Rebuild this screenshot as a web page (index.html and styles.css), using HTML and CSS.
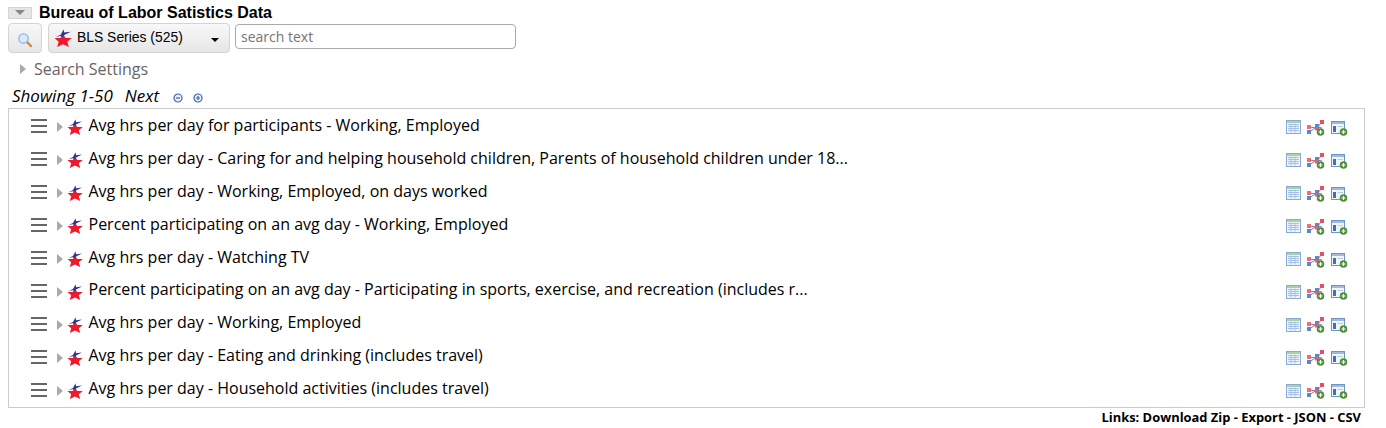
FILE: index.html
```html
<!DOCTYPE html>
<html lang="en">
<head>
<meta charset="UTF-8">
<title>Bureau of Labor Satistics Data</title>
<link rel="stylesheet" href="styles.css">
</head>
<body>
<svg class="defs" width="0" height="0">
    <defs>
        <symbol id="star" viewBox="0 0 16 16">
            <path d="M8 4.500 L10.200 8 L15.800 8 L11.800 11.300 L13.200 16 L8 13.500 L2.800 16 L4.200 11.300 L0.400 8 L5.800 8Z" fill="#f0182c"/>
            <path d="M1.500 7 L6 5 L8.500 0.300 L9 3.200 L15 2.400 L9.500 5.200 L7.500 7 L5.500 6.300Z" fill="#2f3590"/>
        </symbol>
        <symbol id="table" viewBox="0 0 15 15">
            <rect x="0.500" y="0.500" width="14" height="13" fill="#eef4fb" stroke="#8aaad6"/>
            <rect x="1" y="1" width="13" height="2" fill="#a9d39a"/>
            <path d="M2 4.500H13M2 6.500H13M2 8.500H13M2 10.500H13M5 3.500V12.500M9 3.500V12.500" stroke="#a5c0e4" fill="none"/>
        </symbol>
        <symbol id="chart" viewBox="0 0 18 16">
            <path d="M2 7 L10 8 L15 2" stroke="#e8505e" fill="none"/>
            <path d="M2 12 L10 7 L15 8" stroke="#5f86c8" fill="none"/>
            <rect x="0" y="5" width="4" height="4" fill="#e8707a"/>
            <rect x="13" y="0" width="4" height="4" fill="#e8505e"/>
            <rect x="8" y="6.500" width="4" height="4" fill="#e8606e"/>
            <rect x="0" y="10" width="4" height="4" fill="#5f86c8"/>
            <rect x="8" y="4" width="4" height="3.500" fill="#5f86c8"/>
            <circle cx="13.500" cy="12" r="3.800" fill="#4f8f3c"/>
            <path d="M11.500 12H15.500M13.500 10V14" stroke="#fff" stroke-width="1.200"/>
        </symbol>
        <symbol id="panel" viewBox="0 0 17 16">
            <rect x="0.500" y="1.500" width="13" height="12" fill="#f2f6fb" stroke="#6f94c6"/>
            <rect x="1" y="2" width="12" height="2" fill="#9dbce2"/>
            <rect x="2" y="6" width="3" height="6" fill="#3f70b4"/>
            <path d="M6.500 6.500H12" stroke="#b9cde6"/>
            <circle cx="12.500" cy="12" r="3.800" fill="#4f8f3c"/>
            <path d="M10.500 12H14.500M12.500 10V14" stroke="#fff" stroke-width="1.200"/>
        </symbol>
    </defs>
</svg>

<div class="title-bar">
    <button class="toggle"><span class="toggle-arrow"></span></button>
    <span class="title">Bureau of Labor Satistics Data</span>
</div>

<div class="search-bar">
    <button class="btn btn-search">
        <svg width="16" height="16" viewBox="0 0 16 16">
            <path d="M9.500 9.500L14 14" stroke="#c98a3a" stroke-width="2.400" stroke-linecap="round"/>
            <circle cx="6.500" cy="6.500" r="4.700" fill="#dbe9f8" stroke="#8fb4de" stroke-width="1.300"/>
        </svg>
    </button>
    <button class="btn btn-series">
        <svg class="star-big" width="18" height="18"><use href="#star"/></svg>
        <span class="series-label">BLS Series (525)</span>
        <span class="caret"></span>
    </button>
    <input class="search-input" type="text" placeholder="search text">
</div>

<div class="settings"><span class="arrow"></span>Search Settings</div>

<div class="paging">
    <span>Showing 1-50</span>
    <span class="next">Next</span>
    <svg class="zoom-btn first" width="10" height="10" viewBox="0 0 10 10"><circle cx="5" cy="5" r="4" fill="#e6eefa" stroke="#3f63b5" stroke-width="1.200"/><path d="M3 5H7" stroke="#3f63b5" stroke-width="1.200"/></svg>
    <svg class="zoom-btn" width="10" height="10" viewBox="0 0 10 10"><circle cx="5" cy="5" r="4" fill="#e6eefa" stroke="#3f63b5" stroke-width="1.200"/><path d="M3 5H7M5 3V7" stroke="#3f63b5" stroke-width="1.200"/></svg>
</div>

<div class="list">
    <div class="row">
        <span class="menu"></span><span class="arrow"></span>
        <svg class="star" width="16" height="16"><use href="#star"/></svg>
        <span class="name">Avg hrs per day for participants - Working, Employed</span>
        <span class="row-icons">
            <svg width="15" height="15"><use href="#table"/></svg>
            <svg width="18" height="16"><use href="#chart"/></svg>
            <svg width="17" height="16"><use href="#panel"/></svg>
        </span>
    </div>
    <div class="row">
        <span class="menu"></span><span class="arrow"></span>
        <svg class="star" width="16" height="16"><use href="#star"/></svg>
        <span class="name">Avg hrs per day - Caring for and helping household children, Parents of household children under 18...</span>
        <span class="row-icons">
            <svg width="15" height="15"><use href="#table"/></svg>
            <svg width="18" height="16"><use href="#chart"/></svg>
            <svg width="17" height="16"><use href="#panel"/></svg>
        </span>
    </div>
    <div class="row">
        <span class="menu"></span><span class="arrow"></span>
        <svg class="star" width="16" height="16"><use href="#star"/></svg>
        <span class="name">Avg hrs per day - Working, Employed, on days worked</span>
        <span class="row-icons">
            <svg width="15" height="15"><use href="#table"/></svg>
            <svg width="18" height="16"><use href="#chart"/></svg>
            <svg width="17" height="16"><use href="#panel"/></svg>
        </span>
    </div>
    <div class="row">
        <span class="menu"></span><span class="arrow"></span>
        <svg class="star" width="16" height="16"><use href="#star"/></svg>
        <span class="name">Percent participating on an avg day - Working, Employed</span>
        <span class="row-icons">
            <svg width="15" height="15"><use href="#table"/></svg>
            <svg width="18" height="16"><use href="#chart"/></svg>
            <svg width="17" height="16"><use href="#panel"/></svg>
        </span>
    </div>
    <div class="row">
        <span class="menu"></span><span class="arrow"></span>
        <svg class="star" width="16" height="16"><use href="#star"/></svg>
        <span class="name">Avg hrs per day - Watching TV</span>
        <span class="row-icons">
            <svg width="15" height="15"><use href="#table"/></svg>
            <svg width="18" height="16"><use href="#chart"/></svg>
            <svg width="17" height="16"><use href="#panel"/></svg>
        </span>
    </div>
    <div class="row">
        <span class="menu"></span><span class="arrow"></span>
        <svg class="star" width="16" height="16"><use href="#star"/></svg>
        <span class="name">Percent participating on an avg day - Participating in sports, exercise, and recreation (includes r...</span>
        <span class="row-icons">
            <svg width="15" height="15"><use href="#table"/></svg>
            <svg width="18" height="16"><use href="#chart"/></svg>
            <svg width="17" height="16"><use href="#panel"/></svg>
        </span>
    </div>
    <div class="row">
        <span class="menu"></span><span class="arrow"></span>
        <svg class="star" width="16" height="16"><use href="#star"/></svg>
        <span class="name">Avg hrs per day - Working, Employed</span>
        <span class="row-icons">
            <svg width="15" height="15"><use href="#table"/></svg>
            <svg width="18" height="16"><use href="#chart"/></svg>
            <svg width="17" height="16"><use href="#panel"/></svg>
        </span>
    </div>
    <div class="row">
        <span class="menu"></span><span class="arrow"></span>
        <svg class="star" width="16" height="16"><use href="#star"/></svg>
        <span class="name">Avg hrs per day - Eating and drinking (includes travel)</span>
        <span class="row-icons">
            <svg width="15" height="15"><use href="#table"/></svg>
            <svg width="18" height="16"><use href="#chart"/></svg>
            <svg width="17" height="16"><use href="#panel"/></svg>
        </span>
    </div>
    <div class="row">
        <span class="menu"></span><span class="arrow"></span>
        <svg class="star" width="16" height="16"><use href="#star"/></svg>
        <span class="name">Avg hrs per day - Household activities (includes travel)</span>
        <span class="row-icons">
            <svg width="15" height="15"><use href="#table"/></svg>
            <svg width="18" height="16"><use href="#chart"/></svg>
            <svg width="17" height="16"><use href="#panel"/></svg>
        </span>
    </div>
</div>

<div class="links">Links: Download Zip - Export - JSON - CSV</div>
</body>
</html>
```

FILE: styles.css
```css
body{
    margin: 0;
    padding: 0 21px 0 8px;
    background: #fff;
    color: #000;
    font-family: "Open Sans", sans-serif;
    font-size: 16px;
    overflow: hidden;
}
.defs{
    display: block;
    height: 0;
}
button{
    padding: 0;
    font-family: inherit;
}
.title-bar{
    display: flex;
    align-items: center;
    height: 21px;
    padding-top: 2px;
}
.toggle{
    display: flex;
    align-items: center;
    justify-content: center;
    width: 24px;
    height: 12px;
    background: #e6e6e6;
    border: 1px solid #d4d4d4;
}
.toggle-arrow{
    border-top: 5px solid #888;
    border-left: 5px solid transparent;
    border-right: 5px solid transparent;
}
.title{
    margin-left: 7px;
    font-family: "Liberation Sans", sans-serif;
    font-size: 16px;
    font-weight: bold;
}
.search-bar{
    display: flex;
    align-items: flex-start;
    height: 30px;
    padding-top: 0;
}
.btn{
    display: flex;
    align-items: center;
    height: 30px;
    background: linear-gradient(#f8f8f8, #e6e6e6);
    border: 1px solid #d4d4d4;
    border-radius: 4px;
}
.btn-search{
    justify-content: center;
    width: 34px;
    padding-top: 4px;
}
.btn-series{
    width: 182px;
    margin-left: 6px;
    padding-left: 5px;
    font-family: "Liberation Sans", sans-serif;
    font-size: 13.900px;
    color: #000;
}
.star-big{
    flex: none;
}
.series-label{
    margin-left: 5px;
    margin-top: -2px;
}
.caret{
    margin-left: auto;
    margin-right: 10px;
    margin-top: 3px;
    border-top: 4px solid #000;
    border-left: 4px solid transparent;
    border-right: 4px solid transparent;
}
.search-input{
    box-sizing: border-box;
    width: 281px;
    height: 25px;
    margin-left: 5px;
    margin-top: 1px;
    padding: 0 5px;
    border: 1px solid #aaa;
    border-radius: 4px;
    font-family: "Open Sans", sans-serif;
    font-size: 14px;
}
.settings{
    display: flex;
    align-items: center;
    height: 24px;
    margin-top: 4px;
    padding-left: 12px;
    color: #666;
}
.settings .arrow{
    margin-right: 8px;
}
.arrow{
    display: inline-block;
    flex: none;
    border-left: 6px solid #aaa;
    border-top: 5px solid transparent;
    border-bottom: 5px solid transparent;
}
.paging{
    display: flex;
    align-items: center;
    height: 24px;
    margin-top: 2px;
    margin-bottom: 1px;
    padding-left: 4px;
    font-size: 17px;
    font-style: italic;
}
.next{
    margin-left: 12px;
}
.zoom-btn{
    margin-left: 10px;
    margin-top: 5px;
}
.zoom-btn.first{
    margin-left: 14px;
}
.list{
    box-sizing: border-box;
    height: 300px;
    padding-top: 1px;
    border: 1px solid #ccc;
}
.row{
    display: flex;
    align-items: center;
    height: 32.900px;
    padding-left: 22px;
    padding-right: 16px;
}
.menu{
    flex: none;
    width: 16px;
    height: 2px;
    border-top: 2px solid #666;
    border-bottom: 2px solid #666;
    padding: 4px 0;
    margin-right: 1px;
    background: #666;
    background-clip: content-box;
}
.row .arrow{
    margin-left: 9px;
    margin-top: 2px;
}
.star{
    flex: none;
    margin-left: 4px;
    margin-top: 2px;
}
.name{
    margin-left: 5.500px;
    margin-top: -3px;
    white-space: nowrap;
}
.row-icons{
    display: flex;
    align-items: center;
    gap: 6px;
    margin-left: auto;
    margin-top: 3px;
}
.links{
    margin-right: 4px;
    text-align: right;
    font-size: 12.900px;
    font-weight: bold;
}
```
